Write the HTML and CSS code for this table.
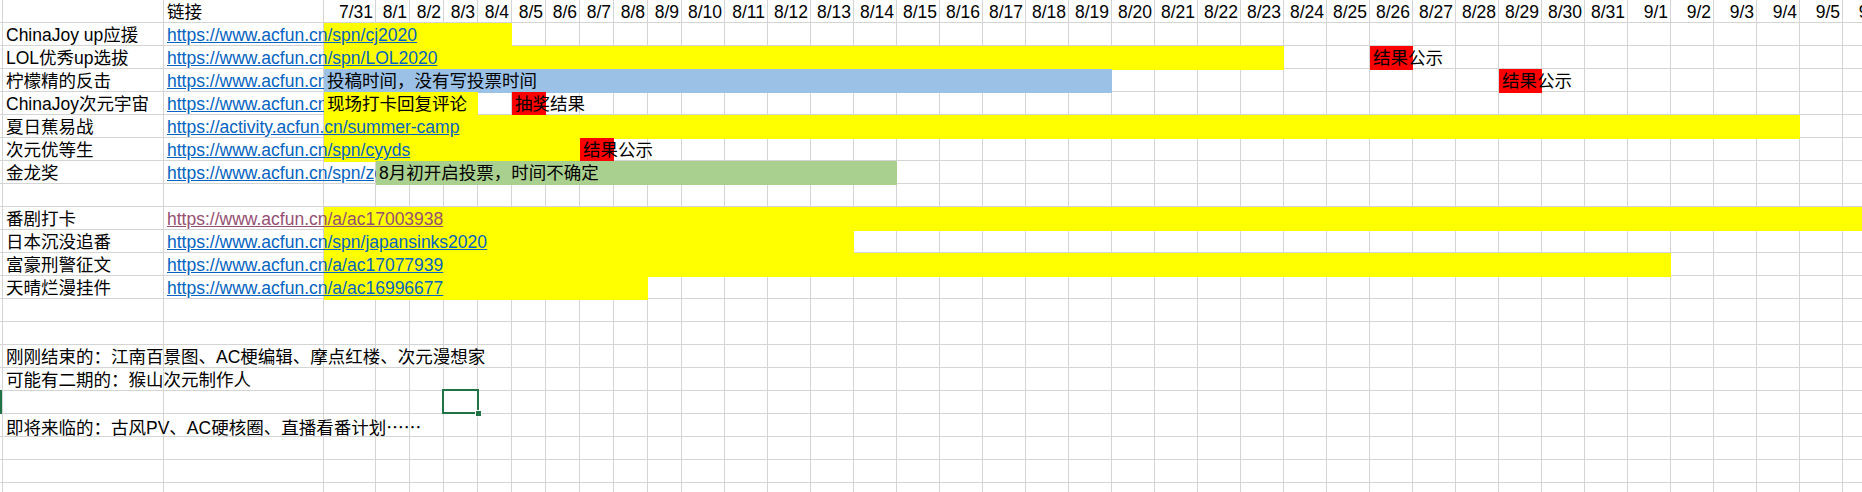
FILE: index.html
```html
<!DOCTYPE html>
<html lang="zh-CN">
<head>
    <meta charset="UTF-8">
    <title>活动排期</title>
    <link rel="stylesheet" href="styles.css">
</head>
<body>
    <div class="sheet">
        <div class="row head">
            <span></span>
            <span></span>
            <span class="cell">链接</span>
            <span class="cell date">7/31</span>
            <span class="cell date">8/1</span>
            <span class="cell date">8/2</span>
            <span class="cell date">8/3</span>
            <span class="cell date">8/4</span>
            <span class="cell date">8/5</span>
            <span class="cell date">8/6</span>
            <span class="cell date">8/7</span>
            <span class="cell date">8/8</span>
            <span class="cell date">8/9</span>
            <span class="cell date">8/10</span>
            <span class="cell date">8/11</span>
            <span class="cell date">8/12</span>
            <span class="cell date">8/13</span>
            <span class="cell date">8/14</span>
            <span class="cell date">8/15</span>
            <span class="cell date">8/16</span>
            <span class="cell date">8/17</span>
            <span class="cell date">8/18</span>
            <span class="cell date">8/19</span>
            <span class="cell date">8/20</span>
            <span class="cell date">8/21</span>
            <span class="cell date">8/22</span>
            <span class="cell date">8/23</span>
            <span class="cell date">8/24</span>
            <span class="cell date">8/25</span>
            <span class="cell date">8/26</span>
            <span class="cell date">8/27</span>
            <span class="cell date">8/28</span>
            <span class="cell date">8/29</span>
            <span class="cell date">8/30</span>
            <span class="cell date">8/31</span>
            <span class="cell date">9/1</span>
            <span class="cell date">9/2</span>
            <span class="cell date">9/3</span>
            <span class="cell date">9/4</span>
            <span class="cell date">9/5</span>
            <span class="cell date">9/6</span>
        </div>

        <!-- 活动 -->
        <div class="row">
            <div class="fill yellow" style="grid-column: 4 / 9"></div>
            <div class="cell name">ChinaJoy up应援</div>
            <div class="cell link">https://www.acfun.cn/spn/cj2020</div>
        </div>
        <div class="row">
            <div class="fill yellow" style="grid-column: 4 / 28"></div>
            <div class="fill red" style="grid-column: 30 / 31"></div>
            <div class="cell name">LOL优秀up选拔</div>
            <div class="cell link">https://www.acfun.cn/spn/LOL2020</div>
            <div class="cell note" style="grid-column: 30 / -1">结果公示</div>
        </div>
        <div class="row">
            <div class="fill blue" style="grid-column: 4 / 24"></div>
            <div class="fill red" style="grid-column: 33 / 34"></div>
            <div class="cell name">柠檬精的反击</div>
            <div class="cell link clip">https://www.acfun.cn/spn/lemon</div>
            <div class="cell note clip" style="grid-column: 4 / 33">投稿时间，没有写投票时间</div>
            <div class="cell note" style="grid-column: 33 / -1">结果公示</div>
        </div>
        <div class="row">
            <div class="fill yellow" style="grid-column: 4 / 8"></div>
            <div class="fill red" style="grid-column: 9 / 10"></div>
            <div class="cell name">ChinaJoy次元宇宙</div>
            <div class="cell link clip">https://www.acfun.cn/spn/cjcyyz</div>
            <div class="cell note clip" style="grid-column: 4 / 9">现场打卡回复评论</div>
            <div class="cell note" style="grid-column: 9 / -1">抽奖结果</div>
        </div>
        <div class="row">
            <div class="fill yellow" style="grid-column: 4 / 40"></div>
            <div class="cell name">夏日蕉易战</div>
            <div class="cell link">https://activity.acfun.cn/summer-camp</div>
        </div>
        <div class="row">
            <div class="fill yellow" style="grid-column: 4 / 11"></div>
            <div class="fill red" style="grid-column: 11 / 12"></div>
            <div class="cell name">次元优等生</div>
            <div class="cell link clip" style="grid-column: 3 / 11">https://www.acfun.cn/spn/cyyds</div>
            <div class="cell note" style="grid-column: 11 / -1">结果公示</div>
        </div>
        <div class="row">
            <div class="fill green" style="grid-column: 5 / 19"></div>
            <div class="cell name">金龙奖</div>
            <div class="cell link clip" style="grid-column: 3 / 5">https://www.acfun.cn/spn/zgjlj</div>
            <div class="cell note" style="grid-column: 5 / -1">8月初开启投票，时间不确定</div>
        </div>
        <div class="row"></div>

        <!-- 番剧 -->
        <div class="row">
            <div class="fill yellow" style="grid-column: 4 / -1"></div>
            <div class="cell name">番剧打卡</div>
            <div class="cell link visited">https://www.acfun.cn/a/ac17003938</div>
        </div>
        <div class="row">
            <div class="fill yellow" style="grid-column: 4 / 18"></div>
            <div class="cell name">日本沉没追番</div>
            <div class="cell link">https://www.acfun.cn/spn/japansinks2020</div>
        </div>
        <div class="row">
            <div class="fill yellow" style="grid-column: 4 / 37"></div>
            <div class="cell name">富豪刑警征文</div>
            <div class="cell link">https://www.acfun.cn/a/ac17077939</div>
        </div>
        <div class="row">
            <div class="fill yellow" style="grid-column: 4 / 13"></div>
            <div class="cell name">天晴烂漫挂件</div>
            <div class="cell link">https://www.acfun.cn/a/ac16996677</div>
        </div>
        <div class="row"></div>
        <div class="row"></div>

        <!-- 备注 -->
        <div class="row">
            <div class="cell name wide">刚刚结束的：江南百景图、AC梗编辑、摩点红楼、次元漫想家</div>
        </div>
        <div class="row">
            <div class="cell name wide">可能有二期的：猴山次元制作人</div>
        </div>
        <div class="row">
            <div class="rowmark"></div>
            <div class="selected"></div>
        </div>
        <div class="row">
            <div class="cell name wide">即将来临的：古风PV、AC硬核圈、直播看番计划<span class="cjk">……</span></div>
        </div>
    </div>
</body>
</html>
```

FILE: styles.css
```css
body {
    margin: 0;
    overflow: hidden;
    background: #fff;
    color: #000;
    font-family: "Liberation Sans", "Noto Sans CJK SC", sans-serif;
    font-size: 17.5px;
}

/* 表格网格线 */
.sheet {
    --cols: 3px 161px 160px 52px repeat(9, 34px) repeat(28, 43px);
    width: 1886px;
    height: 492px;
    background-color: #fff;
    background-image:
        repeating-linear-gradient(to bottom, transparent 0 22px, #d4d4d4 22px 23px),
        linear-gradient(#d4d4d4, #d4d4d4),
        linear-gradient(#d4d4d4, #d4d4d4),
        linear-gradient(#d4d4d4, #d4d4d4),
        linear-gradient(#d4d4d4, #d4d4d4),
        repeating-linear-gradient(to right, transparent 0 33px, #d4d4d4 33px 34px),
        repeating-linear-gradient(to right, transparent 0 42px, #d4d4d4 42px 43px);
    background-size: 100% 100%, 1px 100%, 1px 100%, 1px 100%, 1px 100%, 306px 100%, 1204px 100%;
    background-position: 0 0, 2px 0, 163px 0, 323px 0, 375px 0, 376px 0, 682px 0;
    background-repeat: no-repeat;
}

.row {
    display: grid;
    grid-template-columns: var(--cols);
    height: 23px;
}
.row > * {
    grid-row: 1;
}

.cell {
    padding: 1px 3px 0;
    line-height: 23px;
    white-space: nowrap;
    min-width: 0;
}
.clip {
    overflow: hidden;
}
.date {
    text-align: right;
}
.name {
    grid-column: 2;
}
.wide {
    grid-column: 2 / -1;
}
.cjk {
    font-family: "Noto Sans CJK SC", sans-serif;
}
.link {
    grid-column: 3 / -1;
    color: #0563c1;
    text-decoration: underline;
}
.link.clip {
    grid-column: 3 / 4;
}
.visited {
    color: #954f72;
}

.yellow { background: #ffff00; }
.blue { background: #9bc2e6; }
.green { background: #a9d08e; }
.red { background: #ff0000; }

/* 选中单元格 */
.rowmark {
    grid-column: 1;
    width: 2px;
    margin-top: -1px;
    background: #217346;
}
.selected {
    grid-column: 7 / 8;
    position: relative;
    margin: -2px -1px 0 -2px;
    border: 2px solid #217346;
}
.selected::after {
    content: "";
    position: absolute;
    right: -5px;
    bottom: -5px;
    width: 5px;
    height: 5px;
    background: #217346;
    border: 1px solid #fff;
}
```
